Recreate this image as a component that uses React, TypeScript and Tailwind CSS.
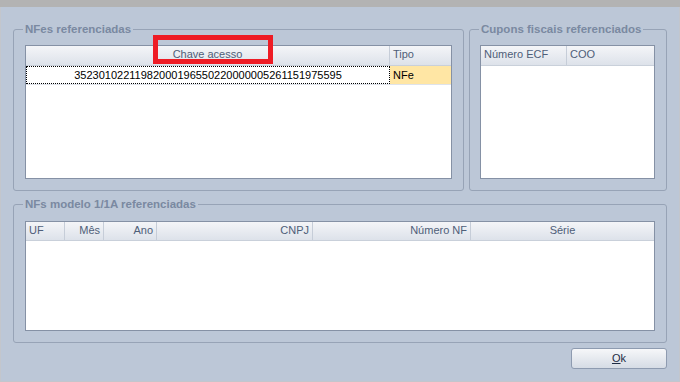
import React from "react";

const font = { fontFamily: '"Liberation Sans", Arial, sans-serif' };

function Hdr({ children, className = "" }: { children?: React.ReactNode; className?: string }) {
  return (
    <div
      className={
        "h-full flex items-center px-[3px] pb-[2px] text-[11px] text-[#4f5e78] border-r border-[#c6cdd8] bg-gradient-to-b from-[#f4f5f8] to-[#dde2ea] whitespace-nowrap " +
        className
      }
    >
      {children}
    </div>
  );
}

function Group({
  title,
  className = "",
  children,
}: {
  title: string;
  className?: string;
  children: React.ReactNode;
}) {
  return (
    <fieldset className={"border border-[#97a3b6] rounded-[3px] p-0 m-0 min-w-0 " + className}>
      <legend className="ml-[9px] px-[2px] text-[11.5px] font-bold leading-[14px] text-[#7a89a1]">
        {title}
      </legend>
      {children}
    </fieldset>
  );
}

export default function App() {
  return (
    <div style={font} className="relative w-[680px] h-[382px] flex flex-col bg-[#bcc7d7] overflow-hidden">
      <div className="h-[7px] bg-[#b3b3b3] shrink-0" />
      <div className="flex-1 flex flex-col border-l border-b border-r border-[#c3c6cc] pl-[12px] pr-[12px] pt-[15px]">
        <div className="flex gap-[5px]">
          <Group title="NFes referenciadas" className="w-[451px]">
            <div className="pt-[9px] pb-[11px] pl-[11px] pr-[11px]">
              <div className="h-[134px] border border-[#8591a5] bg-white flex flex-col">
                <div className="h-[20px] flex border-b border-[#c9d0da]">
                  <Hdr className="w-[364px] justify-center">Chave acesso</Hdr>
                  <Hdr className="flex-1 border-r-0">Tipo</Hdr>
                </div>
                <div className="h-[18px] flex text-[11px] text-black">
                  <div className="w-[364px] flex items-center justify-center border border-dotted border-black">
                    35230102211982000196550220000005261151975595
                  </div>
                  <div className="flex-1 flex items-center px-[3px] bg-[#ffe6a4]">NFe</div>
                </div>
                <div className="border-t border-[#dfe3ea]" />
              </div>
            </div>
          </Group>
          <Group title="Cupons fiscais referenciados" className="w-[198px]">
            <div className="pt-[9px] pb-[11px] pl-[10px] pr-[11px]">
              <div className="h-[134px] border border-[#8591a5] bg-white flex flex-col">
                <div className="h-[20px] flex border-b border-[#c9d0da]">
                  <Hdr className="w-[86px]">Número ECF</Hdr>
                  <Hdr className="flex-1 border-r-0">COO</Hdr>
                </div>
              </div>
            </div>
          </Group>
        </div>

        <Group title="NFs modelo 1/1A referenciadas" className="w-[654px] mt-[6px]">
          <div className="pt-[10px] pb-[11px] pl-[11px] pr-[11px]">
            <div className="h-[110px] border border-[#8591a5] bg-white flex flex-col">
              <div className="h-[19px] flex border-b border-[#c9d0da]">
                <Hdr className="w-[39px]">UF</Hdr>
                <Hdr className="w-[39px] justify-end">Mês</Hdr>
                <Hdr className="w-[53px] justify-end">Ano</Hdr>
                <Hdr className="w-[156px] justify-end">CNPJ</Hdr>
                <Hdr className="w-[158px] justify-end">Número NF</Hdr>
                <Hdr className="flex-1 justify-center border-r-0">Série</Hdr>
              </div>
            </div>
          </div>
        </Group>

        <div className="flex justify-end mt-[5px]">
          <button className="w-[96px] h-[21px] rounded-[3px] border border-[#8e9bb0] bg-gradient-to-b from-[#f6f7f9] to-[#d6dce5] text-[11px] text-[#1e2b44] flex items-center justify-center">
            <span>
              <span className="underline">O</span>k
            </span>
          </button>
        </div>
      </div>

      {/* red highlight box drawn over the header */}
      <div className="absolute left-[153px] top-[35px] w-[120px] h-[29px] border-[5px] border-[#ee1c25] pointer-events-none" />
    </div>
  );
}
